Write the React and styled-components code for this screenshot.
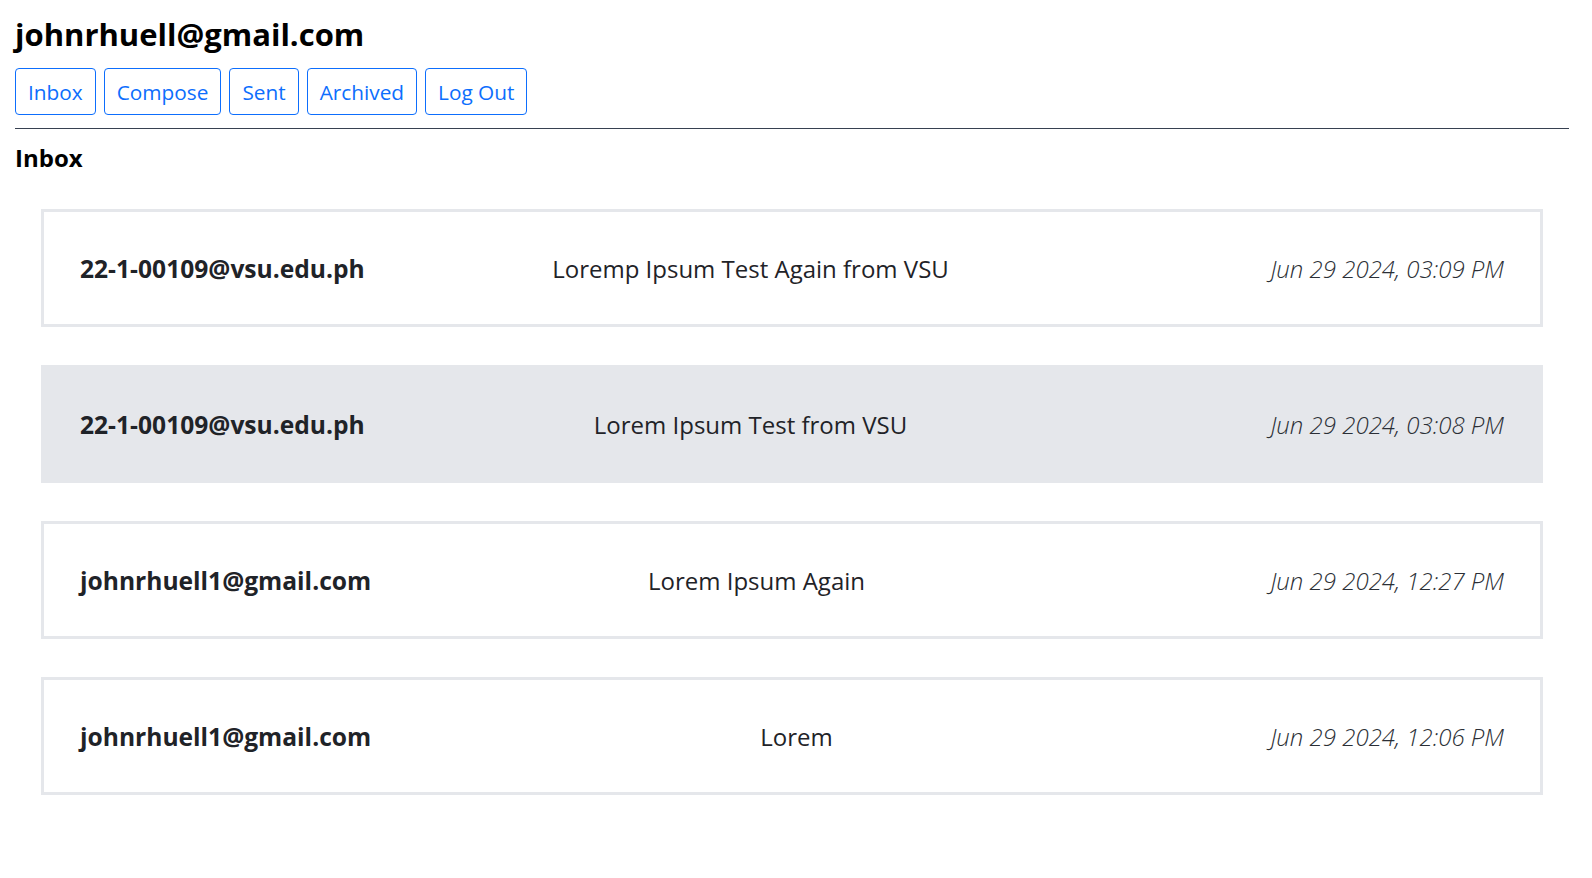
import React from "react";
import styled, { createGlobalStyle } from "styled-components";

const GlobalStyle = createGlobalStyle`
  body {
    margin: 0;
    background: #ffffff;
    font-family: "Open Sans", "Noto Sans", sans-serif;
    color: #111827;
  }
`;

const Page = styled.div`
  padding: 14px 23px 40px 15px;
`;

const UserTitle = styled.h1`
  margin: 0;
  font-size: 31px;
  font-weight: 700;
  line-height: 40px;
  color: #000000;
`;

const Toolbar = styled.nav`
  display: flex;
  gap: 8px;
  margin-top: 14px;
`;

const NavButton = styled.button`
  height: 47px;
  padding: 0 12px;
  border: 1px solid #0d6efd;
  border-radius: 4px;
  background: transparent;
  color: #0d6efd;
  font-family: inherit;
  font-size: 20.8px;
  cursor: pointer;
`;

const Divider = styled.hr`
  margin: 13px 0 0;
  border: 0;
  border-top: 1px solid #374151;
`;

const SectionTitle = styled.h2`
  margin: 12px 0 0;
  font-size: 24px;
  font-weight: 700;
  line-height: 34px;
  color: #000000;
`;

const MailList = styled.div`
  display: flex;
  flex-direction: column;
  gap: 38px;
  margin: 34px 26px 0;
`;

//Mail row - sender, subject, date
const MailCard = styled.div`
  display: grid;
  grid-template-columns: 300px 1fr 383px;
  align-items: center;
  height: 118px;
  box-sizing: border-box;
  padding: 0 36px;
  border: 3px solid #e5e7eb;
  background-color: ${(props) => (props.active ? "#e5e7eb" : "#ffffff")};
  color: #1f2328;
`;

const Sender = styled.div`
  font-size: 24.6px;
  font-weight: 700;
  white-space: nowrap;
`;

const Subject = styled.div`
  font-size: 24px;
  text-align: center;
  white-space: nowrap;
  padding-left: ${(props) => props.shift || 0}px;
`;

const DateText = styled.div`
  font-size: 24px;
  font-weight: 300;
  font-style: italic;
  text-align: right;
  white-space: nowrap;
  color: #2b2f36;
`;

const mails = [
  {
    from: "22-1-00109@vsu.edu.ph",
    subject: "Loremp Ipsum Test Again from VSU",
    date: "Jun 29 2024, 03:09 PM",
  },
  {
    from: "22-1-00109@vsu.edu.ph",
    subject: "Lorem Ipsum Test from VSU",
    date: "Jun 29 2024, 03:08 PM",
    active: true,
  },
  {
    from: "johnrhuell1@gmail.com",
    subject: "Lorem Ipsum Again",
    date: "Jun 29 2024, 12:27 PM",
    shift: 12,
  },
  {
    from: "johnrhuell1@gmail.com",
    subject: "Lorem",
    date: "Jun 29 2024, 12:06 PM",
    shift: 92,
  },
];

export default function App() {
  return (
    <>
      <GlobalStyle />
      <Page>
        <UserTitle>johnrhuell@gmail.com</UserTitle>
        <Toolbar>
          <NavButton>Inbox</NavButton>
          <NavButton>Compose</NavButton>
          <NavButton>Sent</NavButton>
          <NavButton>Archived</NavButton>
          <NavButton>Log Out</NavButton>
        </Toolbar>
        <Divider />
        <SectionTitle>Inbox</SectionTitle>
        <MailList>
          {mails.map((m, i) => (
            <MailCard key={i} active={m.active}>
              <Sender>{m.from}</Sender>
              <Subject shift={m.shift}>{m.subject}</Subject>
              <DateText>{m.date}</DateText>
            </MailCard>
          ))}
        </MailList>
      </Page>
    </>
  );
}
